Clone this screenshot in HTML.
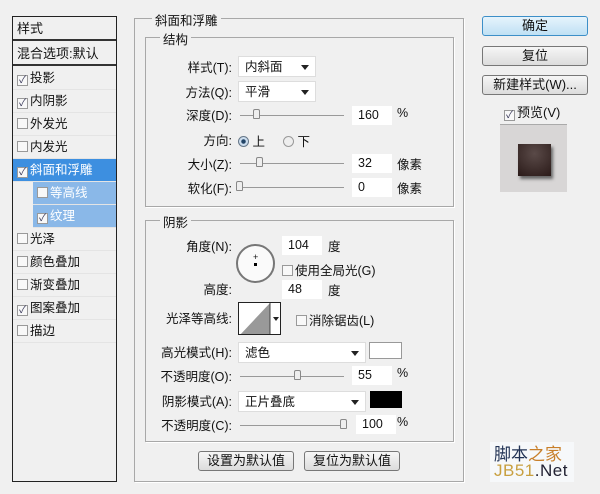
<!DOCTYPE html><html><head><meta charset="utf-8"><style>
*{box-sizing:border-box;margin:0;padding:0}
body{width:600px;height:494px;background:#f0f0f0;font-family:"Liberation Sans","Noto Sans CJK SC",sans-serif;font-size:12.5px;color:#111;position:relative;overflow:hidden}
.a{position:absolute;white-space:nowrap}
.lp{position:absolute;left:12px;top:16px;width:105px;height:466px;border:1px solid #222;background:#f0f0f0}
.row{position:absolute;left:0;width:103px;height:23px;line-height:23px;padding-left:4px;border-bottom:1px solid #e4e4e4}
.cb{display:inline-block;width:11px;height:11px;border:1px solid #999;background:#f8f8f8;vertical-align:-1px;margin-right:2px;font-size:10px;line-height:9px;text-align:center;color:#335}
.grp{position:absolute;border:1px solid #a8a8a8;box-shadow:1px 1px 0 #fff}
.lbl{position:absolute;text-align:right;width:100px;white-space:nowrap;margin-top:-3px}
.dd{position:absolute;background:#fff;border:1px solid #ddd;padding-left:6px;line-height:20px;height:21px}
.dd:after{content:"";position:absolute;right:6px;top:8px;border:4px solid transparent;border-top:5px solid #222;border-bottom:0}
.sl{position:absolute;height:1px;background:#999}
.th{position:absolute;width:7px;height:10px;border:1px solid #888;background:#eee;border-radius:2px 2px 1px 1px}
.in{position:absolute;background:#fff;height:19px;line-height:19px;padding-left:6px;width:40px}
.btn{position:absolute;height:20px;border:1px solid #777;border-radius:3px;background:linear-gradient(#f6f6f6,#dcdcdc);text-align:center;line-height:18px;font-size:13px}
</style></head><body>
<div class="lp">
<div class="row" style="top:0;height:24px;border-bottom:2px solid #333;font-size:13px">样式</div>
<div class="row" style="top:25px;height:24px;border-bottom:2px solid #333;font-size:13px">混合选项:默认</div>
<div class="row" style="top:50px"><span class="cb">✓</span>投影</div>
<div class="row" style="top:73px"><span class="cb">✓</span>内阴影</div>
<div class="row" style="top:96px"><span class="cb"></span>外发光</div>
<div class="row" style="top:119px"><span class="cb"></span>内发光</div>
<div class="row" style="top:142px;background:#3d8fe0;color:#fff"><span class="cb">✓</span>斜面和浮雕</div>
<div class="row" style="top:165px;left:20px;width:83px;background:#8ab8e8;color:#fff"><span class="cb"></span>等高线</div>
<div class="row" style="top:188px;left:20px;width:83px;background:#8ab8e8;color:#fff"><span class="cb">✓</span>纹理</div>
<div class="row" style="top:211px"><span class="cb"></span>光泽</div>
<div class="row" style="top:234px"><span class="cb"></span>颜色叠加</div>
<div class="row" style="top:257px"><span class="cb"></span>渐变叠加</div>
<div class="row" style="top:280px"><span class="cb">✓</span>图案叠加</div>
<div class="row" style="top:303px"><span class="cb"></span>描边</div>
</div>

<div class="grp" style="left:134px;top:18px;width:330px;height:464px"></div>
<div class="a" style="left:152px;top:10px;background:#f0f0f0;padding:0 3px">斜面和浮雕</div>
<div class="grp" style="left:145px;top:37px;width:309px;height:170px"></div>
<div class="a" style="left:160px;top:29px;background:#f0f0f0;padding:0 3px">结构</div>

<div class="lbl" style="left:132px;top:60px">样式(T):</div><div class="dd" style="left:238px;top:56px;width:78px">内斜面</div>
<div class="lbl" style="left:132px;top:85px">方法(Q):</div><div class="dd" style="left:238px;top:81px;width:78px">平滑</div>
<div class="lbl" style="left:132px;top:108px">深度(D):</div><div class="sl" style="left:240px;top:115px;width:104px"></div><div class="th" style="left:253px;top:109px"></div>
<div class="in" style="left:352px;top:106px">160</div><div class="a" style="left:397px;top:106px">%</div>
<div class="lbl" style="left:132px;top:133px">方向:</div>
<div class="a" style="left:238px;top:131px"><span style="display:inline-block;width:11px;height:11px;border-radius:50%;border:1px solid #678;background:radial-gradient(#246 30%,#cde 40%);vertical-align:-1px"></span> 上</div>
<div class="a" style="left:283px;top:131px"><span style="display:inline-block;width:11px;height:11px;border-radius:50%;border:1px solid #999;background:#eee;vertical-align:-1px"></span> 下</div>
<div class="lbl" style="left:132px;top:157px">大小(Z):</div><div class="sl" style="left:240px;top:163px;width:104px"></div><div class="th" style="left:256px;top:157px"></div>
<div class="in" style="left:352px;top:154px">32</div><div class="a" style="left:397px;top:154px">像素</div>
<div class="lbl" style="left:132px;top:181px">软化(F):</div><div class="sl" style="left:240px;top:187px;width:104px"></div><div class="th" style="left:236px;top:181px"></div>
<div class="in" style="left:352px;top:178px">0</div><div class="a" style="left:397px;top:178px">像素</div>

<div class="grp" style="left:145px;top:220px;width:309px;height:222px"></div>
<div class="a" style="left:160px;top:212px;background:#f0f0f0;padding:0 3px">阴影</div>
<div class="lbl" style="left:132px;top:239px">角度(N):</div>
<div class="a" style="left:236px;top:244px;width:39px;height:39px;border-radius:50%;border:2px solid #777;background:#fafafa"></div>
<div class="a" style="left:253px;top:252px;font-size:9px">+</div><div class="a" style="left:254px;top:263px;width:3px;height:3px;background:#000"></div>
<div class="in" style="left:282px;top:236px">104</div><div class="a" style="left:328px;top:236px">度</div>
<div class="a" style="left:282px;top:260px"><span class="cb"></span>使用全局光(G)</div>
<div class="lbl" style="left:132px;top:282px">高度:</div>
<div class="in" style="left:282px;top:280px">48</div><div class="a" style="left:328px;top:280px">度</div>
<div class="lbl" style="left:132px;top:311px">光泽等高线:</div>
<div class="a" style="left:238px;top:302px;width:43px;height:33px;border:1px solid #222;background:#fff;overflow:hidden">
<svg width="43" height="33" style="position:absolute;left:0;top:0"><polygon points="0,33 31,0 31,33" fill="#999"/><line x1="31" y1="0" x2="31" y2="33" stroke="#444"/><polygon points="34,14 40,14 37,18" fill="#222"/></svg></div>
<div class="a" style="left:296px;top:310px"><span class="cb"></span>消除锯齿(L)</div>
<div class="lbl" style="left:132px;top:345px">高光模式(H):</div><div class="dd" style="left:238px;top:342px;width:128px">滤色</div>
<div class="a" style="left:369px;top:342px;width:33px;height:17px;border:1px solid #999;background:#fff"></div>
<div class="lbl" style="left:132px;top:369px">不透明度(O):</div><div class="sl" style="left:240px;top:376px;width:104px"></div><div class="th" style="left:294px;top:370px"></div>
<div class="in" style="left:352px;top:366px">55</div><div class="a" style="left:397px;top:366px">%</div>
<div class="lbl" style="left:132px;top:394px">阴影模式(A):</div><div class="dd" style="left:238px;top:391px;width:128px">正片叠底</div>
<div class="a" style="left:370px;top:391px;width:32px;height:17px;background:#000"></div>
<div class="lbl" style="left:132px;top:418px">不透明度(C):</div><div class="sl" style="left:240px;top:425px;width:104px"></div><div class="th" style="left:340px;top:419px"></div>
<div class="in" style="left:356px;top:415px">100</div><div class="a" style="left:397px;top:415px">%</div>

<div class="btn" style="left:198px;top:451px;width:96px">设置为默认值</div>
<div class="btn" style="left:304px;top:451px;width:96px">复位为默认值</div>

<div class="btn" style="left:482px;top:16px;width:106px;border-color:#3c8fc8;background:linear-gradient(#e6f4fc,#bfe0f4)">确定</div>
<div class="btn" style="left:482px;top:46px;width:106px">复位</div>
<div class="btn" style="left:482px;top:75px;width:106px">新建样式(W)...</div>
<div class="a" style="left:504px;top:102px;font-size:13px"><span class="cb">✓</span>预览(V)</div>
<div class="a" style="left:500px;top:124px;width:67px;height:68px;background:#d8d6d6;border-top:1px solid #aaa">
<div style="position:absolute;left:18px;top:19px;width:33px;height:32px;background:radial-gradient(circle at 50% 30%,#5a4a48,#2a1a18);box-shadow:2px 3px 3px #666"></div></div>
<div class="a" style="left:490px;top:442px;width:84px;height:40px;background:#f6f8fa"></div>
<div class="a" style="left:494px;top:440px;font-size:17px;color:#235"><span>脚本</span><span style="color:#c87f2a">之家</span></div>
<div class="a" style="left:494px;top:461px;font-size:17px;color:#223;font-family:'Liberation Sans',sans-serif;letter-spacing:0.5px"><span style="color:#c8a040">JB51</span>.Net</div>
</body></html>
